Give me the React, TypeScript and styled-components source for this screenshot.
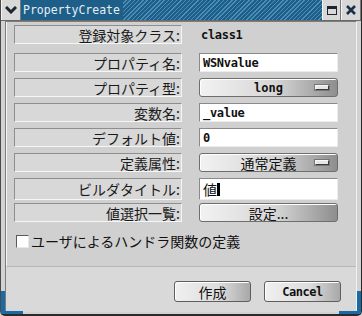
import React from "react";
import styled, { createGlobalStyle } from "styled-components";

const Global = createGlobalStyle`
  html, body { margin: 0; padding: 0; background: #d4d4d4; }
  * { box-sizing: border-box; }
`;

const Window = styled.div`
  position: relative;
  width: 362px;
  height: 316px;
  display: flex;
  flex-direction: column;
  background: #d2d2d2;
  border-left: 1px solid #4a4a4a;
  border-right: 1px solid #2a2a2a;
  border-bottom: 2px solid #2a2a2a;
  border-radius: 0 0 5px 5px;
  overflow: hidden;
  font-family: "Noto Sans CJK JP", sans-serif;
  color: #111;
`;

const TitleBar = styled.div`
  display: flex;
  height: 21px;
  border-bottom: 1px solid #6a6a6a;
`;

const WinButton = styled.div<{ $w: number }>`
  width: ${({ $w }) => $w}px;
  display: flex;
  align-items: center;
  justify-content: center;
  background: #d8d8d8;
  border-left: 1px solid #f4f4f4;
  border-right: 1px solid #7a7a7a;
`;

const TitleArea = styled.div`
  flex: 1;
  display: flex;
  align-items: center;
  background: repeating-linear-gradient(
    135deg,
    #1d5f88 0px,
    #1d5f88 2px,
    #4b8fb6 2px,
    #4b8fb6 3px
  );
`;

const TitleText = styled.span`
  height: 100%;
  display: flex;
  align-items: center;
  padding: 0 3px 0 2px;
  background: #1d5f88;
  color: #e6eef4;
  font-family: "DejaVu Sans Mono", monospace;
  font-size: 11.5px;
`;

const Frame = styled.div`
  flex: 1;
  display: flex;
  flex-direction: column;
  margin: 0 4px 2px 4px;
  border-left: 1px solid #7c7c7c;
  border-top: 1px solid #7c7c7c;
  border-right: 1px solid #f2f2f2;
`;

const Panel = styled.div`
  display: flex;
  flex-direction: column;
  padding: 3px 0 0 7px;
  height: 245px;
  border-left: 1px solid #f4f4f4;
  border-bottom: 1px solid #b8b8b8;
  background: #d0d0d0;
`;

const Row = styled.div<{ $mb: number }>`
  display: grid;
  grid-template-columns: 168px 139px;
  column-gap: 17px;
  height: 19px;
  margin-bottom: ${({ $mb }) => $mb}px;
`;

const Label = styled.div`
  display: flex;
  align-items: center;
  justify-content: flex-end;
  padding-right: 1px;
  background: #d8d8d8;
  border-top: 1px solid #8e8e8e;
  border-left: 1px solid #8e8e8e;
  border-bottom: 1px solid #f6f6f6;
  border-right: 1px solid #f6f6f6;
  font-size: 14px;
  font-weight: 400;
  line-height: 1;
  color: #1a1a1a;
`;

const Plain = styled.div`
  display: flex;
  align-items: center;
  padding-left: 2px;
  font-family: "DejaVu Sans Mono", monospace;
  font-weight: bold;
  font-size: 12px;
  letter-spacing: -0.3px;
`;

const Input = styled.div`
  display: flex;
  align-items: center;
  padding-left: 3px;
  background: #ffffff;
  border-top: 1px solid #8a8a8a;
  border-left: 1px solid #8a8a8a;
  border-bottom: 1px solid #ececec;
  border-right: 1px solid #ececec;
  font-family: "DejaVu Sans Mono", monospace;
  font-weight: bold;
  font-size: 12px;
  letter-spacing: -0.3px;
`;

const Caret = styled.span`
  display: inline-block;
  width: 3px;
  height: 13px;
  background: #000;
`;

const CjkInput = styled(Input)`
  font-family: "Noto Sans CJK JP", sans-serif;
  font-weight: 400;
  font-size: 14px;
`;

const Pushbutton = styled.div<{ $mono?: boolean }>`
  position: relative;
  display: flex;
  align-items: center;
  justify-content: center;
  background: linear-gradient(90deg, #f2f2f2 0%, #d6d6d6 55%, #8e8e8e 100%);
  border: 1px solid #6e6e6e;
  border-radius: 3px;
  box-shadow: inset 1px 1px 0 #ffffff;
  font-family: ${({ $mono }) =>
    $mono ? `"DejaVu Sans Mono", monospace` : `"Noto Sans CJK JP", sans-serif`};
  font-weight: ${({ $mono }) => ($mono ? "bold" : "400")};
  font-size: ${({ $mono }) => ($mono ? "12px" : "14px")};
  line-height: 1;
`;

const OptionMark = styled.span`
  position: absolute;
  right: 8px;
  top: 6px;
  width: 14px;
  height: 5px;
  background: #e6e6e6;
  border: 1px solid #3a3a3a;
  border-top-color: #f8f8f8;
  border-left-color: #f8f8f8;
  box-shadow: 0 0 0 1px #777;
`;

const CheckRow = styled.label`
  display: flex;
  align-items: center;
  gap: 2px;
  margin-top: 9px;
  padding-left: 2px;
  font-size: 14px;
  font-weight: 400;
`;

const Box = styled.span`
  width: 13px;
  height: 13px;
  background: #fff;
  border-top: 1px solid #5a5a5a;
  border-left: 1px solid #5a5a5a;
  border-bottom: 1px solid #e8e8e8;
  border-right: 1px solid #e8e8e8;
`;

const ButtonBar = styled.div`
  flex: 1;
  display: flex;
  justify-content: flex-end;
  align-items: flex-start;
  gap: 13px;
  padding: 14px 15px 0 0;
  background: #d9d9d9;
`;

const DialogButton = styled.div<{ $mono?: boolean }>`
  width: 77px;
  height: 21px;
  display: flex;
  align-items: center;
  justify-content: center;
  border: 1px solid #5e5e5e;
  border-radius: 3px;
  background: linear-gradient(90deg, #f0f0f0 0%, #dcdcdc 60%, #a8a8a8 100%);
  box-shadow: inset 1px 1px 0 #fff;
  font-family: ${({ $mono }) =>
    $mono ? `"DejaVu Sans Mono", monospace` : `"Noto Sans CJK JP", sans-serif`};
  font-weight: ${({ $mono }) => ($mono ? "bold" : "400")};
  font-size: ${({ $mono }) => ($mono ? "12px" : "14px")};
  letter-spacing: ${({ $mono }) => ($mono ? "-0.5px" : "0")};
`;

const Handle = styled.div<{ $side: "left" | "right" }>`
  position: absolute;
  bottom: 0;
  ${({ $side }) => $side}: 0;
  width: 22px;
  height: 23px;
  border-${({ $side }) => $side}: 4px solid #1a6aa6;
  border-bottom: 3px solid #1a6aa6;
  pointer-events: none;
`;

type RowDef = { label: string; kind: "plain" | "input" | "option" | "button" | "cjk"; value: string; mono?: boolean; mb: number };

const rows: RowDef[] = [
  { label: "登録対象クラス:", kind: "plain", value: "class1", mb: 9 },
  { label: "プロパティ名:", kind: "input", value: "WSNvalue", mb: 6 },
  { label: "プロパティ型:", kind: "option", value: "long", mono: true, mb: 6 },
  { label: "変数名:", kind: "input", value: "_value", mb: 6 },
  { label: "デフォルト値:", kind: "input", value: "0", mb: 6 },
  { label: "定義属性:", kind: "option", value: "通常定義", mb: 6 },
  { label: "ビルダタイトル:", kind: "cjk", value: "値", mb: 6 },
  { label: "値選択一覧:", kind: "button", value: "設定...", mb: 0 },
];

function Field({ row }: { row: RowDef }) {
  switch (row.kind) {
    case "plain":
      return <Plain>{row.value}</Plain>;
    case "input":
      return <Input>{row.value}</Input>;
    case "cjk":
      return (
        <CjkInput>
          {row.value}
          <Caret />
        </CjkInput>
      );
    case "option":
      return (
        <Pushbutton $mono={row.mono}>
          {row.value}
          <OptionMark />
        </Pushbutton>
      );
    default:
      return <Pushbutton>{row.value}</Pushbutton>;
  }
}

export default function App() {
  return (
    <>
      <Global />
      <Window>
        <TitleBar>
          <WinButton $w={20}>
            <svg width="12" height="8" viewBox="0 0 12 8">
              <path d="M1 1 L6 6 L11 1" stroke="#1b2530" strokeWidth="3" fill="none" />
            </svg>
          </WinButton>
          <TitleArea>
            <TitleText>PropertyCreate</TitleText>
          </TitleArea>
          <WinButton $w={19}>
            <svg width="10" height="9" viewBox="0 0 10 9">
              <rect x="0.5" y="0.5" width="9" height="8" fill="none" stroke="#1b2530" />
              <rect x="0" y="0" width="10" height="3" fill="#1b2530" />
            </svg>
          </WinButton>
          <WinButton $w={20}>
            <svg width="10" height="10" viewBox="0 0 10 10">
              <path d="M1 1 L9 9 M9 1 L1 9" stroke="#1b3048" strokeWidth="2.6" />
            </svg>
          </WinButton>
        </TitleBar>
        <Frame>
          <Panel>
            {rows.map((r) => (
              <Row key={r.label} $mb={r.mb}>
                <Label>{r.label}</Label>
                <Field row={r} />
              </Row>
            ))}
            <CheckRow>
              <Box />
              ユーザによるハンドラ関数の定義
            </CheckRow>
          </Panel>
          <ButtonBar>
            <DialogButton>作成</DialogButton>
            <DialogButton $mono>Cancel</DialogButton>
          </ButtonBar>
        </Frame>
        <Handle $side="left" />
        <Handle $side="right" />
      </Window>
    </>
  );
}
